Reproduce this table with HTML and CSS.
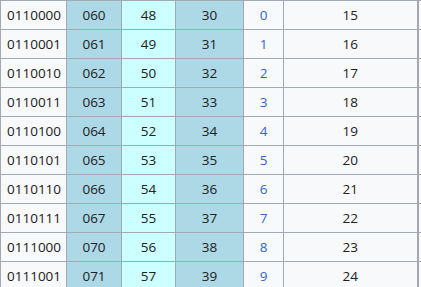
FILE: index.html
```html
<!DOCTYPE html>
<html>
<head>
<meta charset="utf-8">
<link rel="stylesheet" href="styles.css">
</head>
<body>
<table class="codes">
<colgroup>
<col class="c-bin"><col class="c-oct"><col class="c-dec"><col class="c-hex"><col class="c-glyph"><col class="c-num"><col class="c-more">
</colgroup>
<tbody>
<tr><td class="bin">0110000</td><td class="blue">060</td><td class="cyan">48</td><td class="blue">30</td><td class="link">0</td><td class="num">15</td><td class="more"></td></tr>
<tr><td class="bin">0110001</td><td class="blue">061</td><td class="cyan">49</td><td class="blue">31</td><td class="link">1</td><td class="num">16</td><td class="more"></td></tr>
<tr><td class="bin">0110010</td><td class="blue">062</td><td class="cyan">50</td><td class="blue">32</td><td class="link">2</td><td class="num">17</td><td class="more"></td></tr>
<tr><td class="bin">0110011</td><td class="blue">063</td><td class="cyan">51</td><td class="blue">33</td><td class="link">3</td><td class="num">18</td><td class="more"></td></tr>
<tr><td class="bin">0110100</td><td class="blue">064</td><td class="cyan">52</td><td class="blue">34</td><td class="link">4</td><td class="num">19</td><td class="more"></td></tr>
<tr><td class="bin">0110101</td><td class="blue">065</td><td class="cyan">53</td><td class="blue">35</td><td class="link">5</td><td class="num">20</td><td class="more"></td></tr>
<tr><td class="bin">0110110</td><td class="blue">066</td><td class="cyan">54</td><td class="blue">36</td><td class="link">6</td><td class="num">21</td><td class="more"></td></tr>
<tr><td class="bin">0110111</td><td class="blue">067</td><td class="cyan">55</td><td class="blue">37</td><td class="link">7</td><td class="num">22</td><td class="more"></td></tr>
<tr><td class="bin">0111000</td><td class="blue">070</td><td class="cyan">56</td><td class="blue">38</td><td class="link">8</td><td class="num">23</td><td class="more"></td></tr>
<tr><td class="bin">0111001</td><td class="blue">071</td><td class="cyan">57</td><td class="blue">39</td><td class="link">9</td><td class="num">24</td><td class="more"></td></tr>
</tbody>
</table>
</body>
</html>
```
FILE: styles.css
```css
html, body {
  margin: 0;
  padding: 0;
  background: #ffffff;
  overflow: hidden;
}
.codes {
  border-collapse: collapse;
  table-layout: fixed;
  width: 421px;
  font-family: "Open Sans", "Liberation Sans", sans-serif;
  font-size: 13.5px;
  color: #202122;
  background: #f8f9fa;
}
.c-bin { width: 66px; }
.c-oct { width: 55px; }
.c-dec { width: 54px; }
.c-hex { width: 68px; }
.c-glyph { width: 40px; }
.c-num { width: 134px; }
.c-more { width: 4px; }
.codes td {
  border: 1px solid #a2a9b1;
  height: 28px;
  padding: 0;
  text-align: center;
  vertical-align: middle;
  line-height: 18px;
}
.codes td.bin { text-align: left; padding-left: 6px; }
.codes td.blue { background: #add8e6; }
.codes td.cyan { background: #ccffff; }
.codes td.link { color: #3366cc; }
.codes td.more { border-left-width: 2px; border-right: 0; }
```
